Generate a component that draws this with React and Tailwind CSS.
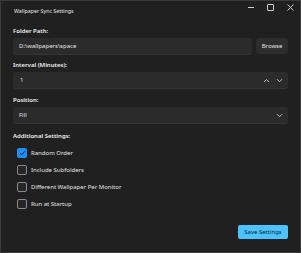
import React from 'react';

const font = { fontFamily: '"Noto Sans", "Open Sans", sans-serif' };

const Chevron = ({ up }) => (
  <svg width="7" height="5" viewBox="0 0 7 5" className="text-[#c8c8c8]">
    <path
      d={up ? 'M1 4 L3.5 1.5 L6 4' : 'M1 1.2 L3.5 3.7 L6 1.2'}
      fill="none"
      stroke="currentColor"
      strokeWidth="1"
    />
  </svg>
);

const Check = ({ label, checked }) => (
  <div className="h-[17px] flex items-center pl-[4px] gap-[4px]">
    <div
      className={
        checked
          ? 'w-[10px] h-[10px] rounded-[2px] bg-[#1e8fef] flex items-center justify-center'
          : 'w-[10px] h-[10px] rounded-[2px] border border-[#8a8a8a] bg-[#262626]'
      }
    >
      {checked && (
        <svg width="7" height="6" viewBox="0 0 7 6">
          <path d="M1 3.2 L2.7 4.8 L6 1.2" fill="none" stroke="#0c1a2a" strokeWidth="1" />
        </svg>
      )}
    </div>
    <span className="text-[6px] text-[#e6e6e6] leading-none">{label}</span>
  </div>
);

export default function App() {
  return (
    <div
      className="w-[301px] h-[253px] bg-[#202020] border border-[#3b3b3b] flex flex-col text-white"
      style={font}
    >
      {/* title bar */}
      <div className="h-[26px] flex items-start">
        <span className="text-[5.3px] text-[#e8e8e8] pl-[13px] pt-[6px] leading-[8px]">
          Wallpaper Sync Settings
        </span>
        <div className="ml-auto flex items-center pt-[3px] pr-[6px] gap-[13px]">
          <div className="w-[7px] h-[7px] flex items-center justify-center">
            <div className="w-[6px] h-px bg-[#d0d0d0]" />
          </div>
          <div className="w-[7px] h-[7px] border border-[#d0d0d0] rounded-[1px]" />
          <svg width="7" height="7" viewBox="0 0 7 7">
            <path d="M0.5 0.5 L6.5 6.5 M6.5 0.5 L0.5 6.5" stroke="#d0d0d0" strokeWidth="1" />
          </svg>
        </div>
      </div>

      <div className="flex-1 flex flex-col px-[12px]">
        <div className="text-[6px] font-semibold leading-[9px] text-[#f2f2f2]">Folder Path:</div>
        <div className="mt-[2px] flex gap-[4px]">
          <div className="flex-1 h-[17px] bg-[#2b2b2b] rounded-[3px] border-b border-[#343434] flex items-center pl-[6px] text-[6px] text-[#e6e6e6]">
            D:\wallpapers\space
          </div>
          <div className="w-[32px] h-[16px] bg-[#2d2d2d] rounded-[3px] flex items-center justify-center text-[6px] text-[#e6e6e6]">
            Browse
          </div>
        </div>

        <div className="mt-[6px] text-[6px] font-semibold leading-[9px] text-[#f2f2f2]">Interval (Minutes):</div>
        <div className="mt-[2px] h-[17px] bg-[#2b2b2b] rounded-[3px] border-b border-[#343434] flex items-center pl-[7px] pr-[5px] text-[6px] text-[#e6e6e6]">
          <span>1</span>
          <div className="ml-auto flex items-center gap-[6px]">
            <Chevron up />
            <Chevron />
          </div>
        </div>

        <div className="mt-[7px] text-[6px] font-semibold leading-[9px] text-[#f2f2f2]">Position:</div>
        <div className="mt-[2px] h-[17px] bg-[#2b2b2b] rounded-[3px] border-b border-[#343434] flex items-center pl-[6px] pr-[5px] text-[6px] text-[#e6e6e6]">
          <span>Fill</span>
          <div className="ml-auto">
            <Chevron />
          </div>
        </div>

        <div className="mt-[8px] text-[6px] font-semibold leading-[9px] text-[#f2f2f2]">Additional Settings:</div>
        <div className="mt-[3px] flex flex-col">
          <Check label="Random Order" checked />
          <Check label="Include Subfolders" />
          <Check label="Different Wallpaper Per Monitor" />
          <Check label="Run at Startup" />
        </div>

        <div className="flex-1 flex items-end justify-end pb-[13px]">
          <div className="w-[50px] h-[14px] bg-[#4cc2ff] rounded-[2px] flex items-center justify-center text-[6px] text-[#0f2230]">
            Save Settings
          </div>
        </div>
      </div>
    </div>
  );
}
